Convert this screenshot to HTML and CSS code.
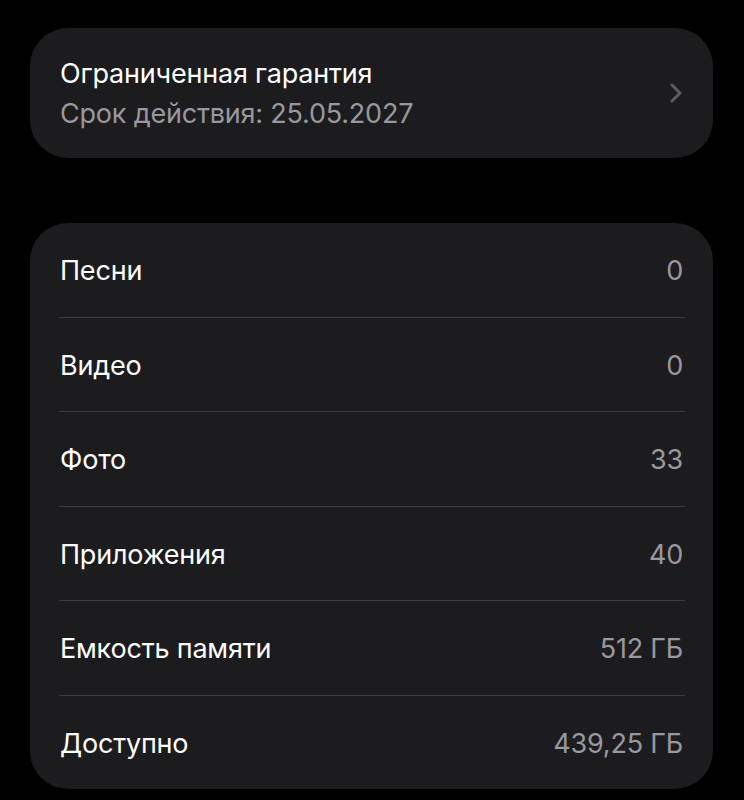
FILE: index.html
```html
<!DOCTYPE html>
<html lang="ru">
<head>
<meta charset="utf-8">
<link rel="stylesheet" href="styles.css">
</head>
<body>
<div class="page">
  <div class="card warranty">
    <div class="warranty-text">
      <div class="title">Ограниченная гарантия</div>
      <div class="subtitle">Срок действия: 25.05.2027</div>
    </div>
    <svg class="chevron" width="12" height="20" viewBox="0 0 12 20"><path d="M2 2 L10 10 L2 18" fill="none" stroke="#5c5c61" stroke-width="3" stroke-linecap="round" stroke-linejoin="round"/></svg>
  </div>

  <div class="card list">
    <div class="row"><span class="label">Песни</span><span class="value">0</span></div>
    <div class="sep"></div>
    <div class="row"><span class="label">Видео</span><span class="value">0</span></div>
    <div class="sep"></div>
    <div class="row"><span class="label">Фото</span><span class="value">33</span></div>
    <div class="sep"></div>
    <div class="row"><span class="label">Приложения</span><span class="value">40</span></div>
    <div class="sep"></div>
    <div class="row"><span class="label">Емкость памяти</span><span class="value">512 ГБ</span></div>
    <div class="sep"></div>
    <div class="row"><span class="label">Доступно</span><span class="value">439,25 ГБ</span></div>
  </div>
</div>
</body>
</html>
```

FILE: styles.css
```css
html, body {
  margin: 0;
  padding: 0;
  background: #000;
}
body {
  font-family: Inter, "Noto Sans", sans-serif;
  color: #fff;
  width: 744px;
  height: 800px;
  overflow: hidden;
}
.page {
  padding: 28px 31px 0 30px;
  display: flex;
  flex-direction: column;
  gap: 65px;
}
.card {
  background: #1c1c1e;
  border-radius: 38px;
}
.warranty {
  height: 130px;
  box-sizing: border-box;
  padding: 0 30px;
  display: flex;
  align-items: center;
  justify-content: space-between;
}
.warranty-text {
  display: flex;
  flex-direction: column;
  gap: 6px;
  padding-top: 1px;
}
.title, .label, .subtitle, .value {
  font-size: 27px;
  line-height: 34px;
  letter-spacing: -0.2px;
  font-weight: 400;
}
.subtitle, .value {
  color: #98989e;
}
.chevron {
  margin-right: 1px;
  display: block;
}
.list {
  padding: 0 30px 0 29px;
}
.row {
  height: 93.5px;
  display: flex;
  align-items: center;
  justify-content: space-between;
  padding-left: 1px;
  padding-top: 3px;
  box-sizing: border-box;
}
.sep {
  height: 1px;
  background: #3d3d41;
  margin-right: -2px;
}
```
